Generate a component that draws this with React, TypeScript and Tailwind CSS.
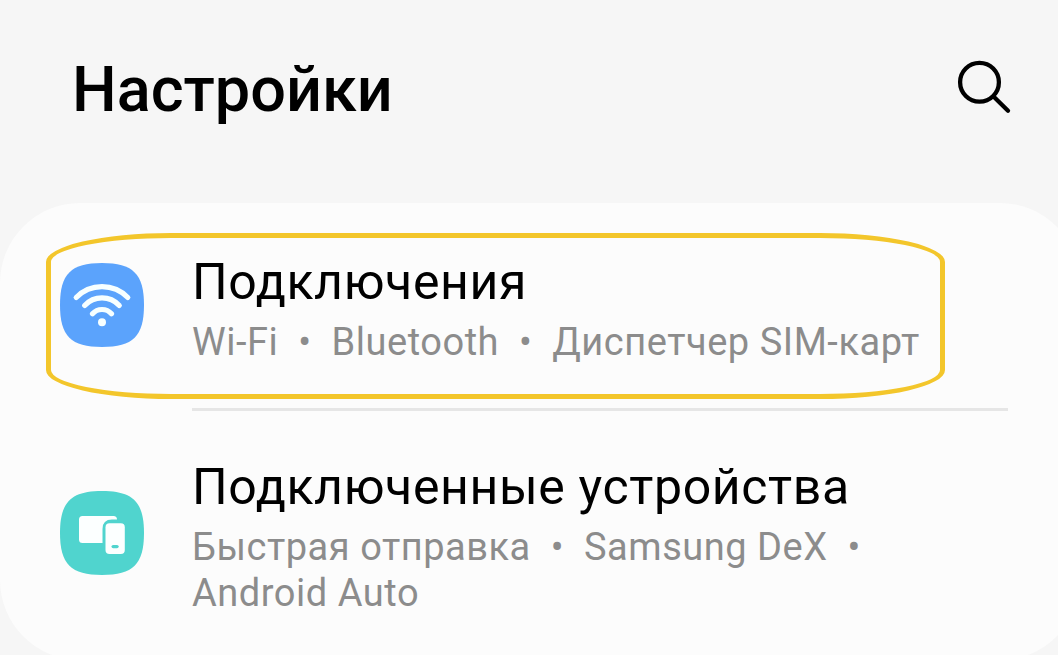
import type { ReactNode } from 'react'

function SearchIcon() {
    return (
        <svg width="56" height="56" viewBox="0 0 56 56" fill="none" stroke="#000" strokeWidth="4.3" strokeLinecap="round">
            <circle cx="23.5" cy="24.3" r="19.4" />
            <path d="M37.5 38.5 52 52.8" />
        </svg>
    )
}

function WifiIcon() {
    return (
        <svg width="84" height="84" viewBox="0 0 84 84" fill="none">
            <path d="M42 0C73 0 84 11 84 42S73 84 42 84 0 73 0 42 11 0 42 0Z" fill="#5ba3fc" />
            <g stroke="#f7ffff" strokeWidth="5.2" strokeLinecap="round">
                <path d="M16.2 34.5A36 36 0 0 1 67.8 34.5" />
                <path d="M24.7 42.4A23.5 23.5 0 0 1 59.3 42.4" />
                <path d="M32.5 50.8A12.6 12.6 0 0 1 51.5 50.8" />
            </g>
            <circle cx="42" cy="59.3" r="4" fill="#f7ffff" />
        </svg>
    )
}

function DevicesIcon() {
    return (
        <svg width="84" height="84" viewBox="0 0 84 84" fill="none">
            <path d="M42 0C73 0 84 11 84 42S73 84 42 84 0 73 0 42 11 0 42 0Z" fill="#50d4ce" />
            <path d="M22.5 25H53.5Q57 25 57 28.5H52Q42.5 28.5 42.5 38V52H22.5Q19 52 19 48.5V28.5Q19 25 22.5 25Z" fill="#fcffff" />
            <rect x="45.5" y="32.3" width="19.3" height="30.7" rx="4" fill="#fcffff" />
            <rect x="51.5" y="53.9" width="7.2" height="3.4" rx="1.7" fill="#50d4ce" />
        </svg>
    )
}

type ItemProps = {
    icon: ReactNode
    iconClass: string
    title: string
    children: ReactNode
}

function SettingsItem({ icon, iconClass, title, children }: ItemProps) {
    return (
        <div className="flex items-start">
            <div className={`shrink-0 ${iconClass}`}>{icon}</div>
            <div className="ml-12 whitespace-nowrap">
                <h2 className="text-[50px] leading-[60px] tracking-[0.62px] text-black">{title}</h2>
                <p className="mt-[7px] text-[38px] leading-[46px] tracking-[0.53px] text-[#8c8c8c]">{children}</p>
            </div>
        </div>
    )
}

export default function App() {
    return (
        <div className="h-[655px] w-[1058px] overflow-hidden bg-[#f6f6f6] font-['Roboto',sans-serif]">
            <header className="flex h-[203px] items-start justify-between pt-[52px] pr-[46px] pl-[72px]">
                <h1 className="text-[63px] leading-[76px] font-medium text-black">Настройки</h1>
                <button type="button" aria-label="Поиск" className="mt-1.5">
                    <SearchIcon />
                </button>
            </header>
            <main className="relative h-[457px] w-[1080px] rounded-[80px] bg-[#fcfcfc] pt-[49px] pl-[60px]">
                <SettingsItem icon={<WifiIcon />} iconClass="mt-[11px]" title="Подключения">
                    Wi-Fi&nbsp; •&nbsp; Bluetooth&nbsp; •&nbsp; Диспетчер SIM-карт
                </SettingsItem>
                <div className="mt-[43px] mb-[46px] ml-[132px] h-[3px] w-[816px] bg-[#e6e6e6]" />
                <SettingsItem icon={<DevicesIcon />} iconClass="mt-[34px]" title="Подключенные устройства">
                    Быстрая отправка&nbsp; •&nbsp; Samsung DeX&nbsp; •<br />
                    Android Auto
                </SettingsItem>
                {/* highlight around the first item */}
                <div className="pointer-events-none absolute top-[30px] left-[46px] h-[166px] w-[899px] rounded-[125px/29px] border-[5px] border-[#f3c62b]" />
            </main>
        </div>
    )
}
